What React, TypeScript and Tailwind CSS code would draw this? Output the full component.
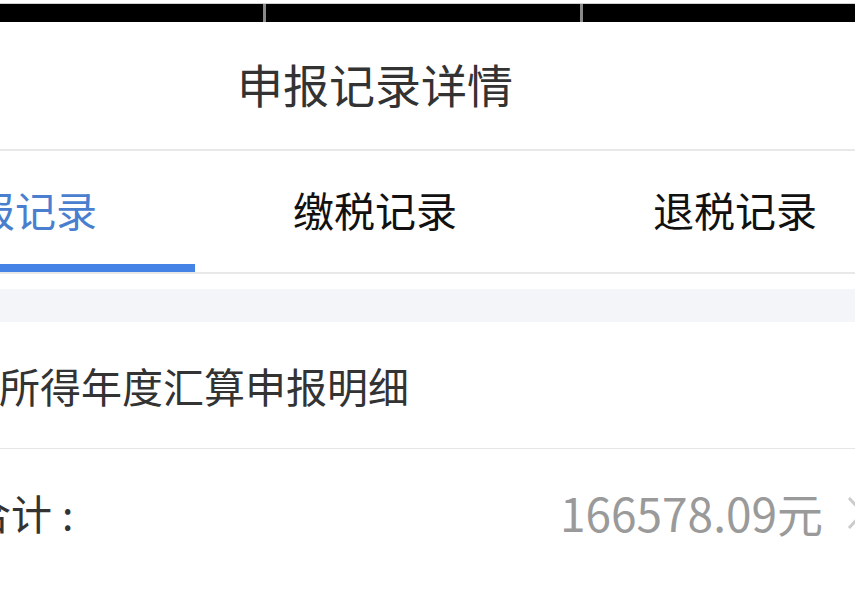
import React from 'react';

const font = { fontFamily: '"Noto Sans CJK SC", "Noto Sans", sans-serif' };

const tabs = ['申报记录', '缴税记录', '退税记录'];

const App = () => {
    return (
        <div className="w-[855px] h-[600px] overflow-hidden bg-white" style={font}>
            {/* status bar strip */}
            <div className="h-[4px] bg-white border-b border-[#d0d0d0]" />
            <div className="flex h-[18px] bg-black">
                <div className="w-[263px]" />
                <div className="w-[3px] bg-[#8a8a8a]" />
                <div className="w-[314px]" />
                <div className="w-[3px] bg-[#8a8a8a]" />
                <div className="flex-1" />
            </div>

            <div className="w-[1080px] ml-[-165px]">
                {/* Nav title */}
                <div className="h-[129px] flex items-center justify-center border-b-2 border-[#e8e8e8]">
                    <h1 className="text-[46px] leading-none text-[#333333] pb-[5px]">申报记录详情</h1>
                </div>

                {/* Tabs */}
                <div className="grid grid-cols-3 h-[123px] border-b-2 border-[#e8e8e8]">
                    {tabs.map((t, i) => (
                        <div key={t} className="flex flex-col">
                            <div className={`flex-1 flex items-center justify-center pt-[3px] text-[41px] leading-none ${i === 0 ? 'text-[#4a7fd0]' : 'text-[#111111]'}`}>
                                {t}
                            </div>
                            <div className={`h-[8px] ${i === 0 ? 'bg-[#4584e6]' : 'bg-transparent'}`} />
                        </div>
                    ))}
                </div>

                <div className="h-[15px] bg-white" />
                <div className="h-[33px] bg-[#f4f5f9]" />

                {/* Detail rows */}
                <div className="h-[127px] flex items-center pl-[82px] border-b border-[#e6e6e6]">
                    <span className="text-[41px] leading-none text-[#333333]">综合所得年度汇算申报明细</span>
                </div>
                <div className="h-[127px] flex items-center justify-between pl-[135px] pr-[50px]">
                    <span className="text-[41px] leading-none text-[#333333]">
                        合计<span className="ml-[10px]">:</span>
                    </span>
                    <div className="flex items-center gap-[24px]">
                        <span className="text-[46px] leading-none text-[#9a9a9a] pb-[2px]">166578.09元</span>
                        <svg width="18" height="34" viewBox="0 0 18 34" fill="none">
                            <polyline points="2,2 16,17 2,32" stroke="#cccccc" strokeWidth="3" />
                        </svg>
                    </div>
                </div>
            </div>
        </div>
    );
};

export default App;
